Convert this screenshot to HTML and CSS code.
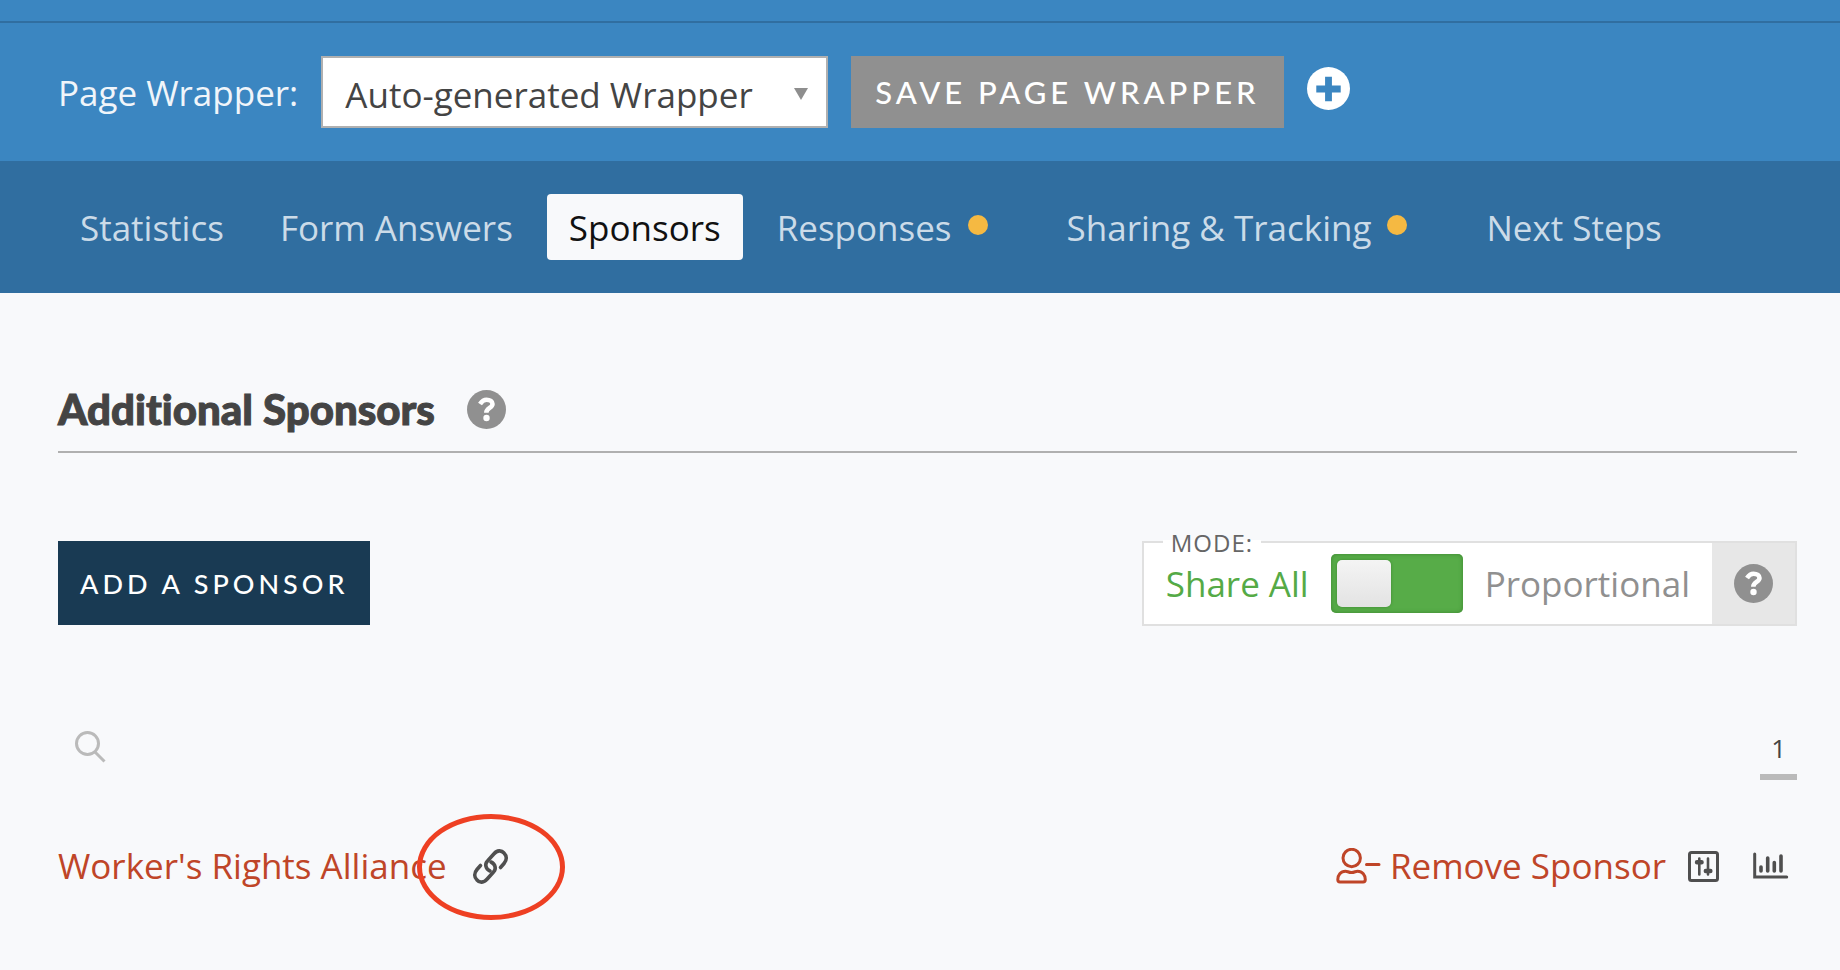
FILE: index.html
```html
<!DOCTYPE html>
<html lang="en">
<head>
    <meta charset="utf-8">
    <title>Additional Sponsors</title>
    <link rel="stylesheet" href="styles.css">
</head>
<body>
    <header class="wrapper-bar">
        <form class="wrapper-form">
            <label for="page-wrapper">Page Wrapper:</label>
            <div class="select-box">
                <select id="page-wrapper">
                    <option>Auto-generated Wrapper</option>
                </select>
                <svg class="select-arrow" viewBox="0 0 14 12" aria-hidden="true"><path d="M0 0h14L7 12z"/></svg>
            </div>
            <button type="button" class="save-button">Save Page Wrapper</button>
            <a href="#" class="add-wrapper" aria-label="Add page wrapper">
                <svg class="icon-plus" viewBox="0 0 44 44" aria-hidden="true">
                    <circle cx="22" cy="22" r="22" fill="#fff"/>
                    <path d="M22 10v25M9.500 22.500h25" stroke="#3b86c1" stroke-width="7"/>
                </svg>
            </a>
        </form>
    </header>

    <nav class="tabs">
        <a href="#">Statistics</a>
        <a href="#">Form Answers</a>
        <a href="#" class="active" aria-current="page">Sponsors</a>
        <a href="#" class="has-dot">Responses</a>
        <a href="#" class="has-dot">Sharing &amp; Tracking</a>
        <a href="#">Next Steps</a>
    </nav>

    <main class="content">
        <div class="section-heading">
            <h2>Additional Sponsors</h2>
            <button type="button" class="help" aria-label="Help">
                <svg class="icon-help" viewBox="0 0 39 39" aria-hidden="true">
                    <circle cx="19.5" cy="19.5" r="19.500"/>
                    <path d="M13 14c2-3 4-4.300 6.500-4.300 3.500 0 6 1.800 6 4.300 0 4-6.200 4-6.200 8.700" stroke="#fff" stroke-width="4.600" fill="none"/>
                    <circle cx="19.5" cy="28" r="3.200" fill="#fff"/>
                </svg>
            </button>
        </div>

        <div class="actions">
            <button type="button" class="add-button">Add a Sponsor</button>
            <fieldset class="mode">
                <legend>MODE:</legend>
                <div class="mode-row">
                    <label for="mode-switch" class="mode-share">Share All</label>
                    <input type="checkbox" id="mode-switch" class="switch">
                    <label for="mode-switch" class="mode-proportional">Proportional</label>
                    <button type="button" class="help mode-help" aria-label="Help with mode">
                        <svg class="icon-help" viewBox="0 0 39 39" aria-hidden="true">
                            <circle cx="19.5" cy="19.5" r="19.500"/>
                            <path d="M13 14c2-3 4-4.300 6.500-4.300 3.500 0 6 1.800 6 4.300 0 4-6.200 4-6.200 8.700" stroke="#fff" stroke-width="4.600" fill="none"/>
                            <circle cx="19.5" cy="28" r="3.200" fill="#fff"/>
                        </svg>
                    </button>
                </div>
            </fieldset>
        </div>

        <div class="list-tools">
            <button type="button" class="search" aria-label="Search">
                <svg class="icon-search" viewBox="0 0 31 32" aria-hidden="true">
                    <circle cx="12.500" cy="12.500" r="11"/>
                    <path d="M20 21l9.500 9.500"/>
                </svg>
            </button>
            <a href="#" class="page-number">1</a>
        </div>

        <div class="sponsor">
            <a href="#" class="sponsor-name">Worker's Rights Alliance</a>
            <a href="#" class="sponsor-link" aria-label="Sponsor link">
                <svg class="icon-link" viewBox="0 0 35 35" aria-hidden="true">
                    <path d="M17 22C12.500 20 11.500 15 14.500 12L21 4.800C24 1 28.500 1 31 4C34 7 34 11 31 14.500L27.500 18.500"/>
                    <path d="M18 13C22.500 15 23.500 20 20.500 23L14 30.200C11 34 6.500 34 4 31C1 28 1 24 4 20.500L7.500 16.500"/>
                </svg>
                <span class="highlight"></span>
            </a>
            <div class="sponsor-actions">
                <a href="#" class="remove">
                    <svg class="icon-remove" viewBox="0 0 45 36" aria-hidden="true">
                        <circle cx="15.700" cy="10" r="8.700"/>
                        <path d="M9.500 23.200c2 0 3 1.300 6 1.300s4-1.300 6-1.300c5 0 7.800 4 7.800 8.300 0 1.800-.600 2.500-2.200 2.500H4c-1.600 0-2.200-.700-2.200-2.500 0-4.300 2.700-8.300 7.700-8.300zM30.500 16.500h12.500"/>
                    </svg>
                    Remove Sponsor
                </a>
                <a href="#" aria-label="Sponsor settings">
                    <svg class="icon-settings" viewBox="0 0 31 31" aria-hidden="true">
                        <rect x="1.500" y="1.500" width="28" height="28" rx="2"/>
                        <path d="M11.300 7.500v16M20 7.500v16" stroke-width="2.600"/>
                        <path d="M9 11.200h4.600M17.800 20h4.600" stroke-width="4.400"/>
                    </svg>
                </a>
                <a href="#" aria-label="Sponsor statistics">
                    <svg class="icon-chart" viewBox="0 0 36 28" aria-hidden="true">
                        <path d="M1.700 2v23h32"/>
                        <path d="M8 15v4M14.700 6v13M21.300 10.500v8.500M28 4v15" stroke-width="3.600"/>
                    </svg>
                </a>
            </div>
        </div>
    </main>
</body>
</html>
```
FILE: styles.css
```css
* {
    box-sizing: border-box;
}
body {
    margin: 0;
    background-color: #f8f9fb;
    color: #444;
    font-family: "Open Sans", sans-serif;
    font-size: 35px;
    line-height: 48px;
}
a {
    color: inherit;
    text-decoration: none;
}
button {
    border: 0;
    padding: 0;
    background: none;
    cursor: pointer;
}
svg {
    display: block;
    fill: none;
}
.wrapper-bar {
    padding-top: 21px;
    background-color: #3b86c1;
}
.wrapper-form {
    display: flex;
    align-items: center;
    gap: 23px;
    padding: 33px 58px;
    border-top: 2px solid #306ea0;
    color: #f0f5fa;
}
.wrapper-form label {
    padding-top: 2px;
}
.select-box {
    position: relative;
}
.select-box select {
    display: block;
    appearance: none;
    width: 507px;
    height: 72px;
    padding: 6px 56px 0 22px;
    border: 2px solid #b0b0b0;
    border-radius: 0;
    background-color: #fff;
    color: #444;
    font: inherit;
}
.select-arrow {
    position: absolute;
    top: 32px;
    right: 20px;
    width: 14px;
    height: 12px;
    fill: #8e8e8e;
}
.save-button {
    height: 72px;
    padding: 0 24px;
    background-color: #909090;
    color: #fff;
    font-family: Lato, sans-serif;
    font-size: 31px;
    font-weight: 500;
    letter-spacing: 4px;
    text-transform: uppercase;
}
.add-wrapper {
    padding-bottom: 7px;
}
.icon-plus {
    width: 43px;
    height: 43px;
}
.tabs {
    display: flex;
    gap: 12px;
    padding: 33px 58px;
    background-color: #306ea0;
    color: #cbdbe8;
}
.tabs a {
    padding: 10px 22px 8px;
    border-radius: 4px;
}
.tabs .active {
    background-color: #f8f9fb;
    color: #111;
}
.tabs .has-dot::after {
    content: "";
    display: inline-block;
    width: 20px;
    height: 20px;
    margin: 0 23px 0 16px;
    border-radius: 50%;
    background-color: #f5b942;
    vertical-align: 6px;
}
.content {
    padding: 88px 43px 48px 58px;
}
.section-heading {
    display: flex;
    align-items: center;
    gap: 32px;
    padding: 4px 0 18px;
    border-bottom: 2px solid #b0b0b0;
}
.section-heading h2 {
    margin: 0;
    font-family: Lato, sans-serif;
    font-size: 42px;
    font-weight: 900;
    font-variant-ligatures: none;
    -webkit-text-stroke: 1px #444;
}
.icon-help {
    width: 39px;
    height: 39px;
    fill: #909090;
}
.actions {
    display: flex;
    justify-content: space-between;
    padding-top: 88px;
}
.add-button {
    height: 84px;
    padding: 0 22px;
    background-color: #193a53;
    color: #fff;
    font-family: Lato, sans-serif;
    font-size: 27px;
    font-weight: 500;
    letter-spacing: 4px;
    text-transform: uppercase;
}
.mode {
    position: relative;
    height: 85px;
    margin: 0;
    padding: 0;
    border: 2px solid #e0e0e0;
    background-color: #fff;
}
.mode legend {
    position: absolute;
    top: -14px;
    left: 19px;
    padding: 0 8px;
    background-image: linear-gradient(transparent 11px, #fff 11px);
    color: #666;
    font-size: 24px;
    letter-spacing: 1px;
    line-height: 28px;
}
.mode-row {
    display: flex;
    align-items: center;
    gap: 22px;
    height: 100%;
    padding-left: 22px;
}
.mode-share {
    color: #55aa46;
}
.mode-proportional {
    color: #909090;
}
.switch {
    appearance: none;
    width: 132px;
    height: 59px;
    margin: 0;
    padding: 6px;
    border-radius: 5px;
    background-color: #57ac48;
    box-shadow: inset 0 0 4px #3c8530;
}
.switch::before {
    content: "";
    display: block;
    width: 54px;
    height: 47px;
    border-radius: 5px;
    background-image: linear-gradient(#f4f4f4, #e3e3e3);
    box-shadow: 0 0 3px #3c8530;
}
.switch:checked::before {
    margin-left: auto;
}
.mode-help {
    align-self: stretch;
    padding: 0 22px;
    background-color: #e7e7e7;
}
.list-tools {
    display: flex;
    justify-content: space-between;
    align-items: flex-start;
    padding-top: 98px;
}
.search {
    padding: 7px 17px;
}
.icon-search {
    width: 31px;
    height: 32px;
    stroke: #bababa;
    stroke-width: 3;
}
.page-number {
    padding: 0 11px 2px;
    border-bottom: 6px solid #bababa;
    font-size: 26px;
}
.sponsor {
    display: flex;
    align-items: center;
    padding-top: 62px;
}
.sponsor-name,
.remove {
    color: #bf4528;
}
.sponsor-link {
    position: relative;
    margin-left: 26px;
}
.icon-link {
    width: 35px;
    height: 35px;
    overflow: visible;
    stroke: #4f4f4f;
    stroke-width: 3.600;
    stroke-linecap: round;
}
.highlight {
    position: absolute;
    top: -35px;
    left: -56px;
    width: 148px;
    height: 106px;
    border: 5px solid #ee4023;
    border-radius: 50%;
}
.sponsor-actions {
    display: flex;
    align-items: center;
    margin-left: auto;
    padding-right: 8px;
}
.sponsor-actions a + a {
    margin-left: 22px;
}
.sponsor-actions a + a + a {
    margin-left: 34px;
}
.remove {
    display: flex;
    align-items: center;
    gap: 9px;
}
.icon-remove {
    width: 45px;
    height: 36px;
    stroke: currentColor;
    stroke-width: 3;
    stroke-linecap: round;
}
.icon-settings,
.icon-chart {
    width: 31px;
    height: 31px;
    stroke: #4f4f4f;
    stroke-width: 3;
    stroke-linecap: round;
}
.icon-chart {
    width: 36px;
    height: 28px;
}
```
